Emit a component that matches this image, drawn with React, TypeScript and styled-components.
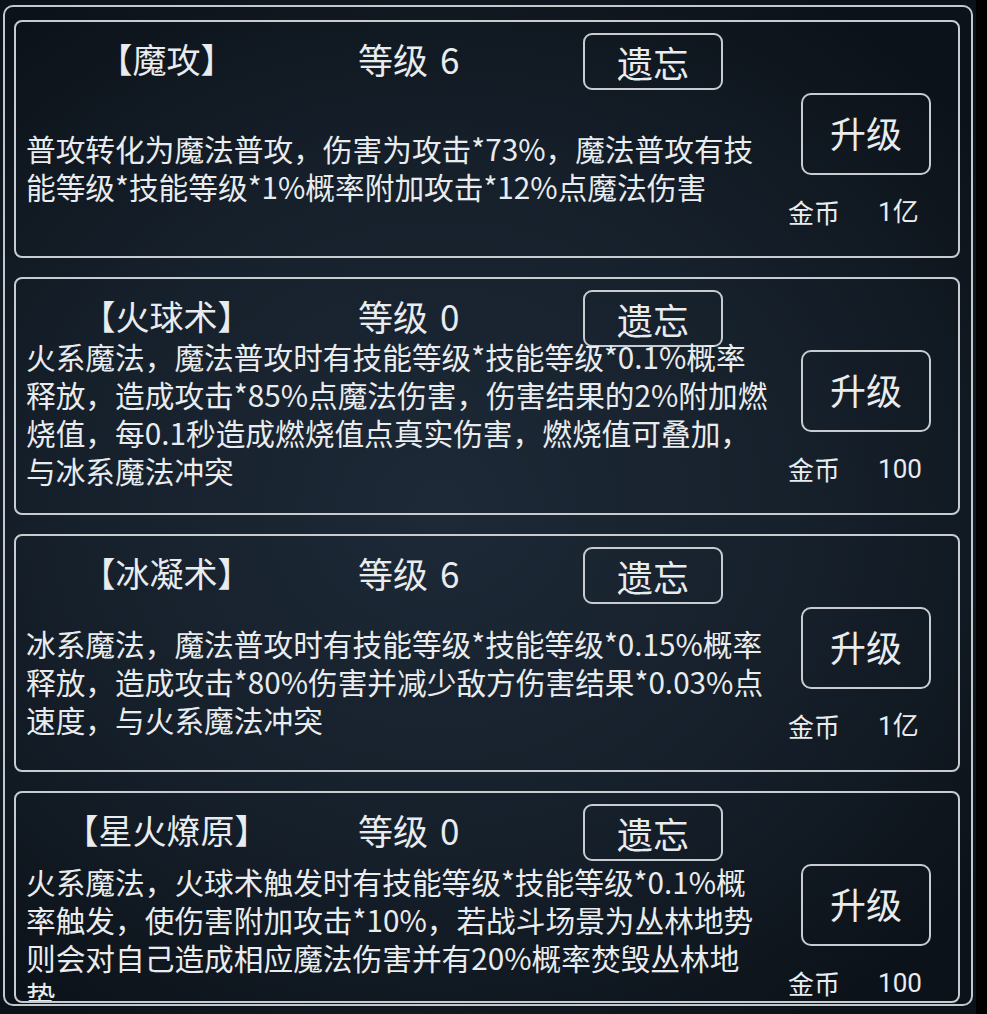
import styled, { createGlobalStyle } from 'styled-components'

type Skill = {
  name: string
  level: number
  lines: string[]
  cost: string
  nudge?: number
}

const SKILLS: Skill[] = [
  {
    name: '【魔攻】',
    level: 6,
    lines: [
      '普攻转化为魔法普攻，伤害为攻击*73%，魔法普攻有技',
      '能等级*技能等级*1%概率附加攻击*12%点魔法伤害',
    ],
    cost: '1亿',
  },
  {
    name: '【火球术】',
    level: 0,
    lines: [
      '火系魔法，魔法普攻时有技能等级*技能等级*0.1%概率',
      '释放，造成攻击*85%点魔法伤害，伤害结果的2%附加燃',
      '烧值，每0.1秒造成燃烧值点真实伤害，燃烧值可叠加，',
      '与冰系魔法冲突',
    ],
    cost: '100',
    nudge: -11,
  },
  {
    name: '【冰凝术】',
    level: 6,
    lines: [
      '冰系魔法，魔法普攻时有技能等级*技能等级*0.15%概率',
      '释放，造成攻击*80%伤害并减少敌方伤害结果*0.03%点',
      '速度，与火系魔法冲突',
    ],
    cost: '1亿',
  },
  {
    name: '【星火燎原】',
    level: 0,
    lines: [
      '火系魔法，火球术触发时有技能等级*技能等级*0.1%概',
      '率触发，使伤害附加攻击*10%，若战斗场景为丛林地势',
      '则会对自己造成相应魔法伤害并有20%概率焚毁丛林地',
      '势',
    ],
    cost: '100',
  },
]

export default function App(): JSX.Element {
  return (
    <>
      <GlobalStyle />
      <Screen>
        <Frame>
          {SKILLS.map((skill) => (
            <Card key={skill.name}>
              <Main>
                <Header>
                  <Title>{skill.name}</Title>
                  <Level>
                    等级<LevelNum>{skill.level}</LevelNum>
                  </Level>
                  <ForgetButton>遗忘</ForgetButton>
                </Header>
                <Body>
                  <Description $nudge={skill.nudge ?? 0}>
                    {skill.lines.map((line, i) => (
                      <div key={i}>{line}</div>
                    ))}
                  </Description>
                </Body>
              </Main>
              <Side>
                <UpgradeButton>升级</UpgradeButton>
                <CostRow>
                  <span>金币</span>
                  <CostValue>{skill.cost}</CostValue>
                </CostRow>
              </Side>
            </Card>
          ))}
        </Frame>
      </Screen>
    </>
  )
}

const GlobalStyle = createGlobalStyle`
  html, body {
    margin: 0;
    padding: 0;
    background: #000;
  }
  body {
    font-family: "Noto Sans CJK SC", "Noto Sans", sans-serif;
    color: #e9ecee;
  }
`

const Screen = styled.div`
  width: 976px;
  height: 1014px;
  overflow: hidden;
  box-sizing: border-box;
  padding: 5px 0 0 3px;
  background: radial-gradient(
    ellipse 70% 60% at 45% 50%,
    #1d2937 0%,
    #16202b 55%,
    #0c1219 100%
  );
`

const Frame = styled.div`
  box-sizing: border-box;
  width: 970px;
  height: 1001px;
  border: 2px solid #c3c8cc;
  border-radius: 10px;
  padding: 13px 11px 1px 9px;
  display: flex;
  flex-direction: column;
  gap: 19px;
  overflow: hidden;
`

const Card = styled.div`
  flex: 0 0 auto;
  box-sizing: border-box;
  height: 238px;
  border: 2px solid #c8ccd0;
  border-radius: 8px;
  display: flex;
  overflow: hidden;

  &:last-child {
    flex: 1 1 0;
    height: auto;
    min-height: 0;
  }
`

const Main = styled.div`
  flex: 1;
  display: grid;
  grid-template-rows: 60px 174px;
  padding-left: 10px;
  min-width: 0;
`

const Header = styled.div`
  height: 60px;
  display: flex;
  align-items: center;
  padding: 19px 0 0 2px;
  box-sizing: border-box;
  font-size: 35px;
`

const Title = styled.div`
  width: 277px;
  margin-bottom: 6px;
  font-size: 34px;
  text-align: center;
  white-space: nowrap;
`

const Level = styled.div`
  margin-left: 53px;
  margin-bottom: 6px;
  width: 225px;
  white-space: nowrap;
`

const LevelNum = styled.span`
  margin-left: 12px;
`

const ForgetButton = styled.div`
  flex: 0 0 auto;
  box-sizing: border-box;
  width: 140px;
  height: 57px;
  border: 2px solid #c8ccd0;
  border-radius: 9px;
  display: flex;
  align-items: center;
  justify-content: center;
  font-size: 36px;
`

const Body = styled.div`
  display: flex;
  align-items: center;
  padding-bottom: 2px;
`

const Description = styled.div<{ $nudge: number }>`
  font-size: 29.7px;
  line-height: 38px;
  white-space: nowrap;
  transform: translateY(${(p) => p.$nudge}px);
`

const Side = styled.div`
  flex: 0 0 170px;
  display: flex;
  flex-direction: column;
  padding-top: 71px;
  box-sizing: border-box;
`

const UpgradeButton = styled.div`
  box-sizing: border-box;
  width: 130px;
  height: 82px;
  margin-left: 13px;
  border: 2px solid #c8ccd0;
  border-radius: 10px;
  display: flex;
  align-items: center;
  justify-content: center;
  font-size: 36px;
  padding-bottom: 4px;
`

const CostRow = styled.div`
  margin-top: 22px;
  display: flex;
  gap: 38px;
  font-size: 26px;
  line-height: 30px;
  white-space: nowrap;
`

const CostValue = styled.span`
  font-family: "Roboto", "Noto Sans CJK SC", sans-serif;
`
